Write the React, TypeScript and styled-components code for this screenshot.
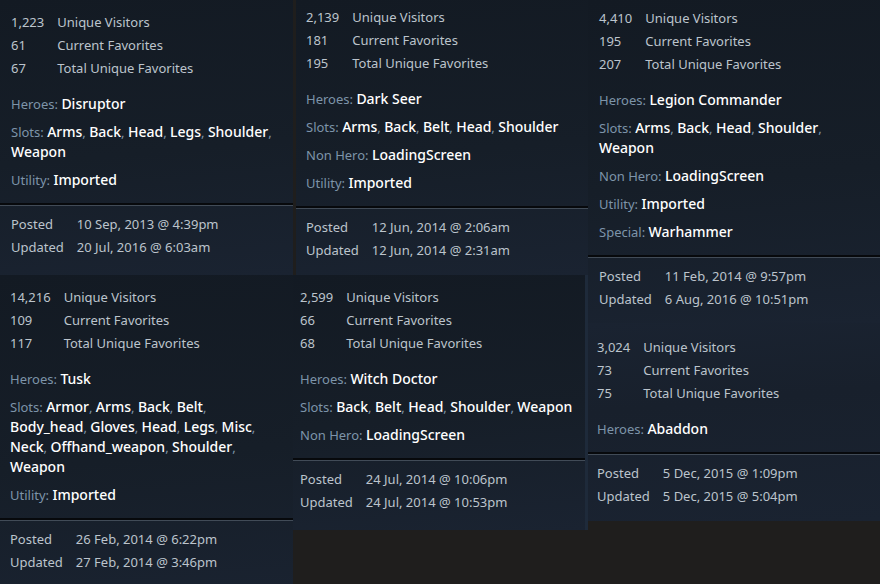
import React from 'react'
import styled, { createGlobalStyle } from 'styled-components'

type Stat = [string, string]
type Tag = { label: string; values: string[] }

type PanelData = {
  id: string
  stats: Stat[]
  tags: Tag[]
  posted: string
  updated: string
  padTop: number
  padBottom: number
  padLeft: number
  shift?: number
  edge?: boolean
  continued?: boolean
}

const GlobalStyle = createGlobalStyle`
  html, body {
    margin: 0;
    padding: 0;
    background: #1f1e1d;
  }
  body {
    font-family: "Noto Sans", "Open Sans", "DejaVu Sans", sans-serif;
    -webkit-font-smoothing: antialiased;
  }
`

const Page = styled.div`
  width: 880px;
  height: 584px;
  overflow: hidden;
  display: flex;
  align-items: flex-start;
  background: #1f1e1d;
`

const Column = styled.div<{ $width: number; $fill?: boolean }>`
  width: ${(p) => p.$width}px;
  flex: none;
  display: flex;
  flex-direction: column;
  background: ${(p) => (p.$fill ? '#10161e' : 'transparent')};
  min-height: ${(p) => (p.$fill ? '584px' : '0')};
`

// a panel that carries on from the one above keeps its tone, so no seam shows
const Panel = styled.div<{
  $pt: number
  $pb: number
  $pl: number
  $shift: number
  $edge: boolean
  $continued: boolean
}>`
  box-sizing: border-box;
  margin-left: ${(p) => p.$shift}px;
  padding: ${(p) => p.$pt}px 8px ${(p) => p.$pb}px 0;
  background: ${(p) =>
    p.$continued
      ? 'linear-gradient(175deg, #1a2331 0%, #18202c 40%, #1a2331 100%)'
      : 'linear-gradient(175deg, #131a23 0%, #161e28 55%, #1a2331 100%)'};
  border-right: ${(p) => (p.$edge ? '3px solid #1e2a3a' : 'none')};
  ${(p) => `& > .pad { padding-left: ${p.$pl}px; }`}
`

const StatGrid = styled.div`
  display: grid;
  grid-template-columns: max-content 1fr;
  column-gap: 13px;
  font-size: 13px;
  line-height: 23px;
  color: #bcc4cc;
`

const Tags = styled.div`
  margin-top: 14.5px;
  display: flex;
  flex-direction: column;
  gap: 8px;
`

const TagLine = styled.div`
  font-size: 13px;
  line-height: 20px;
  color: #7d94a9;
`

const TagValue = styled.span`
  font-size: 14px;
  font-weight: 500;
  color: #ffffff;
`

const Divider = styled.div`
  margin-top: 13px;
  margin-right: -8px;
  height: 2px;
  background: #07090c;
  border-bottom: 1px solid #414b57;
`

const DateGrid = styled.div`
  margin-top: 6.5px;
  display: grid;
  grid-template-columns: max-content 1fr;
  column-gap: 13px;
  font-size: 13px;
  line-height: 23px;
  color: #bcc4cc;
`

function StatsPanel({ data }: { data: PanelData }) {
  return (
    <Panel
      $pt={data.padTop}
      $pb={data.padBottom}
      $pl={data.padLeft}
      $shift={data.shift ?? 0}
      $edge={!!data.edge}
      $continued={!!data.continued}
    >
      <StatGrid className="pad">
        {data.stats.map(([n, label]) => (
          <React.Fragment key={label}>
            <span>{n}</span>
            <span>{label}</span>
          </React.Fragment>
        ))}
      </StatGrid>
      <Tags className="pad">
        {data.tags.map((t) => (
          <TagLine key={t.label}>
            {t.label}:{' '}
            {t.values.map((v, i) => (
              <React.Fragment key={v}>
                <TagValue>{v}</TagValue>
                {i < t.values.length - 1 ? ', ' : ''}
              </React.Fragment>
            ))}
          </TagLine>
        ))}
      </Tags>
      <Divider />
      <DateGrid className="pad">
        <span>Posted</span>
        <span>{data.posted}</span>
        <span>Updated</span>
        <span>{data.updated}</span>
      </DateGrid>
    </Panel>
  )
}

const disruptor: PanelData = {
  id: 'disruptor',
  stats: [['1,223', 'Unique Visitors'], ['61', 'Current Favorites'], ['67', 'Total Unique Favorites']],
  tags: [
    { label: 'Heroes', values: ['Disruptor'] },
    { label: 'Slots', values: ['Arms', 'Back', 'Head', 'Legs', 'Shoulder', 'Weapon'] },
    { label: 'Utility', values: ['Imported'] },
  ],
  posted: '10 Sep, 2013 @ 4:39pm',
  updated: '20 Jul, 2016 @ 6:03am',
  padTop: 10.5,
  padBottom: 16.5,
  padLeft: 11,
}

const tusk: PanelData = {
  id: 'tusk',
  stats: [['14,216', 'Unique Visitors'], ['109', 'Current Favorites'], ['117', 'Total Unique Favorites']],
  tags: [
    { label: 'Heroes', values: ['Tusk'] },
    {
      label: 'Slots',
      values: ['Armor', 'Arms', 'Back', 'Belt', 'Body_head', 'Gloves', 'Head', 'Legs', 'Misc', 'Neck', 'Offhand_weapon', 'Shoulder', 'Weapon'],
    },
    { label: 'Utility', values: ['Imported'] },
  ],
  posted: '26 Feb, 2014 @ 6:22pm',
  updated: '27 Feb, 2014 @ 3:46pm',
  padTop: 10.5,
  padBottom: 30,
  padLeft: 10,
}

const darkSeer: PanelData = {
  id: 'dark-seer',
  stats: [['2,139', 'Unique Visitors'], ['181', 'Current Favorites'], ['195', 'Total Unique Favorites']],
  tags: [
    { label: 'Heroes', values: ['Dark Seer'] },
    { label: 'Slots', values: ['Arms', 'Back', 'Belt', 'Head', 'Shoulder'] },
    { label: 'Non Hero', values: ['LoadingScreen'] },
    { label: 'Utility', values: ['Imported'] },
  ],
  posted: '12 Jun, 2014 @ 2:06am',
  updated: '12 Jun, 2014 @ 2:31am',
  padTop: 5.5,
  padBottom: 13.5,
  padLeft: 10,
  shift: 3,
}

const witchDoctor: PanelData = {
  id: 'witch-doctor',
  stats: [['2,599', 'Unique Visitors'], ['66', 'Current Favorites'], ['68', 'Total Unique Favorites']],
  tags: [
    { label: 'Heroes', values: ['Witch Doctor'] },
    { label: 'Slots', values: ['Back', 'Belt', 'Head', 'Shoulder', 'Weapon'] },
    { label: 'Non Hero', values: ['LoadingScreen'] },
  ],
  posted: '24 Jul, 2014 @ 10:06pm',
  updated: '24 Jul, 2014 @ 10:53pm',
  padTop: 10.5,
  padBottom: 16.5,
  padLeft: 7,
  edge: true,
}

const legion: PanelData = {
  id: 'legion',
  stats: [['4,410', 'Unique Visitors'], ['195', 'Current Favorites'], ['207', 'Total Unique Favorites']],
  tags: [
    { label: 'Heroes', values: ['Legion Commander'] },
    { label: 'Slots', values: ['Arms', 'Back', 'Head', 'Shoulder', 'Weapon'] },
    { label: 'Non Hero', values: ['LoadingScreen'] },
    { label: 'Utility', values: ['Imported'] },
    { label: 'Special', values: ['Warhammer'] },
  ],
  posted: '11 Feb, 2014 @ 9:57pm',
  updated: '6 Aug, 2016 @ 10:51pm',
  padTop: 6.5,
  padBottom: 12.5,
  padLeft: 11,
}

const abaddon: PanelData = {
  id: 'abaddon',
  stats: [['3,024', 'Unique Visitors'], ['73', 'Current Favorites'], ['75', 'Total Unique Favorites']],
  tags: [{ label: 'Heroes', values: ['Abaddon'] }],
  posted: '5 Dec, 2015 @ 1:09pm',
  updated: '5 Dec, 2015 @ 5:04pm',
  padTop: 12.5,
  padBottom: 13.5,
  padLeft: 9,
  continued: true,
}

export default function App() {
  return (
    <>
      <GlobalStyle />
      <Page>
        <Column $width={293} $fill>
          <StatsPanel data={disruptor} />
          <StatsPanel data={tusk} />
        </Column>
        <Column $width={295}>
          <StatsPanel data={darkSeer} />
          <StatsPanel data={witchDoctor} />
        </Column>
        <Column $width={292}>
          <StatsPanel data={legion} />
          <StatsPanel data={abaddon} />
        </Column>
      </Page>
    </>
  )
}
